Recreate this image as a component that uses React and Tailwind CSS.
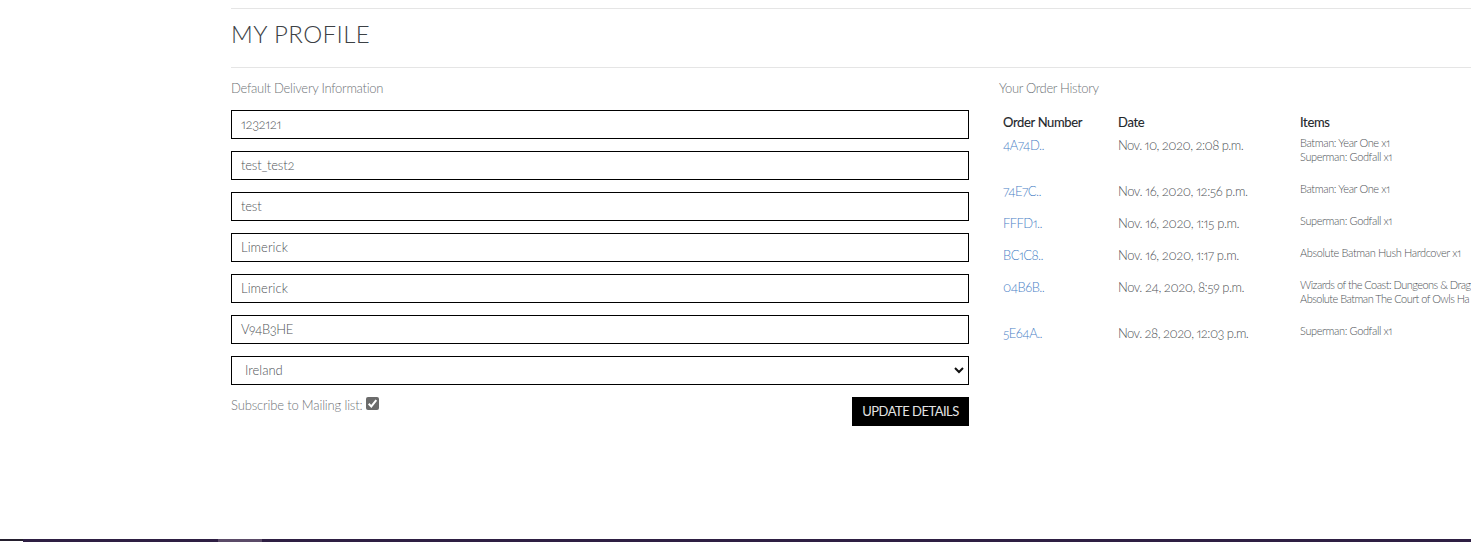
const fields = [
  { value: '1232121', cls: 'tracking-[-0.35px]' },
  { value: 'test_test2', cls: 'tracking-[-0.2px]' },
  { value: 'test', cls: 'tracking-[-0.2px]' },
  { value: 'Limerick', cls: 'tracking-[0.05px]' },
  { value: 'Limerick', cls: 'tracking-[0.05px]' },
  { value: 'V94B3HE', cls: 'tracking-[-0.4px]' },
];

const orders = [
  { id: '4A74D..', date: 'Nov. 10, 2020, 2:08 p.m.', cls: 'tracking-[-0.55px]', items: ['Batman: Year One x1', 'Superman: Godfall x1'] },
  { id: '74E7C..', date: 'Nov. 16, 2020, 12:56 p.m.', cls: 'tracking-[-0.42px]', items: ['Batman: Year One x1'] },
  { id: 'FFFD1..', date: 'Nov. 16, 2020, 1:15 p.m.', cls: 'tracking-[-0.4px]', items: ['Superman: Godfall x1'] },
  { id: 'BC1C8..', date: 'Nov. 16, 2020, 1:17 p.m.', cls: 'tracking-[-0.41px]', items: ['Absolute Batman Hush Hardcover x1'] },
  {
    id: '04B6B..',
    date: 'Nov. 24, 2020, 8:59 p.m.',
    cls: 'tracking-[-0.48px]',
    itemCls: 'tracking-[-0.53px]',
    items: ['Wizards of the Coast: Dungeons & Drag', 'Absolute Batman The Court of Owls Ha'],
  },
  { id: '5E64A..', date: 'Nov. 28, 2020, 12:03 p.m.', cls: 'tracking-[-0.55px]', items: ['Superman: Godfall x1'] },
];

function ProfileForm() {
  return (
    <section className="w-[738px] shrink-0">
      <p className="h-[31px] leading-[19px] tracking-[-0.27px] text-[#6f7478]"><span>Default Delivery Information</span></p>
      <div className="flex flex-col gap-3">
        {fields.map((field, i) => (
          <div key={i} className="flex h-[29px] items-center border border-black px-[9px] text-[#4f5357]">
            <span className={field.cls}>{field.value}</span>
          </div>
        ))}
        <div className="flex h-[29px] items-center justify-between border border-black pl-[13px] pr-[4px] text-[#4f5357]">
          <span>Ireland</span>
          <svg width="10" height="7" viewBox="0 0 10 7" fill="none" stroke="#111" strokeWidth="2">
            <path d="M1 1l4 4 4-4" />
          </svg>
        </div>
        <div className="flex justify-between">
          <div className="flex h-[17px] items-center gap-[3px] text-[#6f7478]">
            <span className="tracking-[-0.16px]">Subscribe to Mailing list:</span>
            <svg className="-mt-[4px]" width="13" height="13" viewBox="0 0 13 13">
              <rect width="13" height="13" rx="2" fill="#6b6b6b" />
              <path d="M2.7 6.8l2.6 2.6 5-6.2" fill="none" stroke="#fff" strokeWidth="2" />
            </svg>
          </div>
          <button className="h-[29px] w-[117px] bg-black pt-[1px] font-normal tracking-[-0.5px] whitespace-nowrap text-[#e4e4e4]">
            <span>UPDATE DETAILS</span>
          </button>
        </div>
      </div>
    </section>
  );
}

function OrderHistory() {
  return (
    <section className="w-[473px] shrink-0">
      <p className="h-[35px] leading-[19px] tracking-[-0.34px] text-[#6f7478]"><span>Your Order History</span></p>
      <div className="grid h-[19px] grid-cols-[115px_182px_1fr] pl-[4px] font-normal leading-[17px] tracking-[-0.34px] text-[#212529] [-webkit-text-stroke:0.1px_#212529]">
        <span>Order Number</span>
        <span>Date</span>
        <span>Items</span>
      </div>
      {orders.map((order) => (
        <div key={order.id} className="grid grid-cols-[115px_182px_1fr] pb-4 pl-[4px] leading-[24px] text-[#4f5357]">
          <a className="h-4 tracking-[-0.55px] text-[#4a7fc6]"><span>{order.id}</span></a>
          <div className="h-4"><span className={order.cls}>{order.date}</span></div>
          <ul className="-mb-px pt-[3px] text-[11px] leading-[14px]">
            {order.items.map((item) => (
              <li key={item} className="whitespace-nowrap">
                <span className={order.itemCls || 'tracking-[-0.38px]'}>{item}</span>
              </li>
            ))}
          </ul>
        </div>
      ))}
    </section>
  );
}

export default function App() {
  return (
    <div className="flex h-[542px] w-full flex-col overflow-hidden bg-white font-['Lato',sans-serif] text-[13px] font-light [font-feature-settings:'onum','pnum']">
      <main className="flex-1 overflow-hidden pl-[231px] pt-[8px]">
        <header className="h-[60px] border-y border-[#e5e5e5]">
          <h1 className="pt-[9px] text-[24px] leading-[32px] tracking-[0.42px] text-[#3c4145]"><span>MY PROFILE</span></h1>
        </header>
        <div className="flex gap-[30px] pt-[11px]">
          <ProfileForm />
          <OrderHistory />
        </div>
      </main>
      <footer className="flex h-[3px] shrink-0 bg-[#2e1f43]">
        <div className="h-full w-[23px] border-b border-white bg-[#241f2e]" />
        <div className="ml-[195px] h-full w-[44px] bg-[#5b4b68]" />
      </footer>
    </div>
  );
}
